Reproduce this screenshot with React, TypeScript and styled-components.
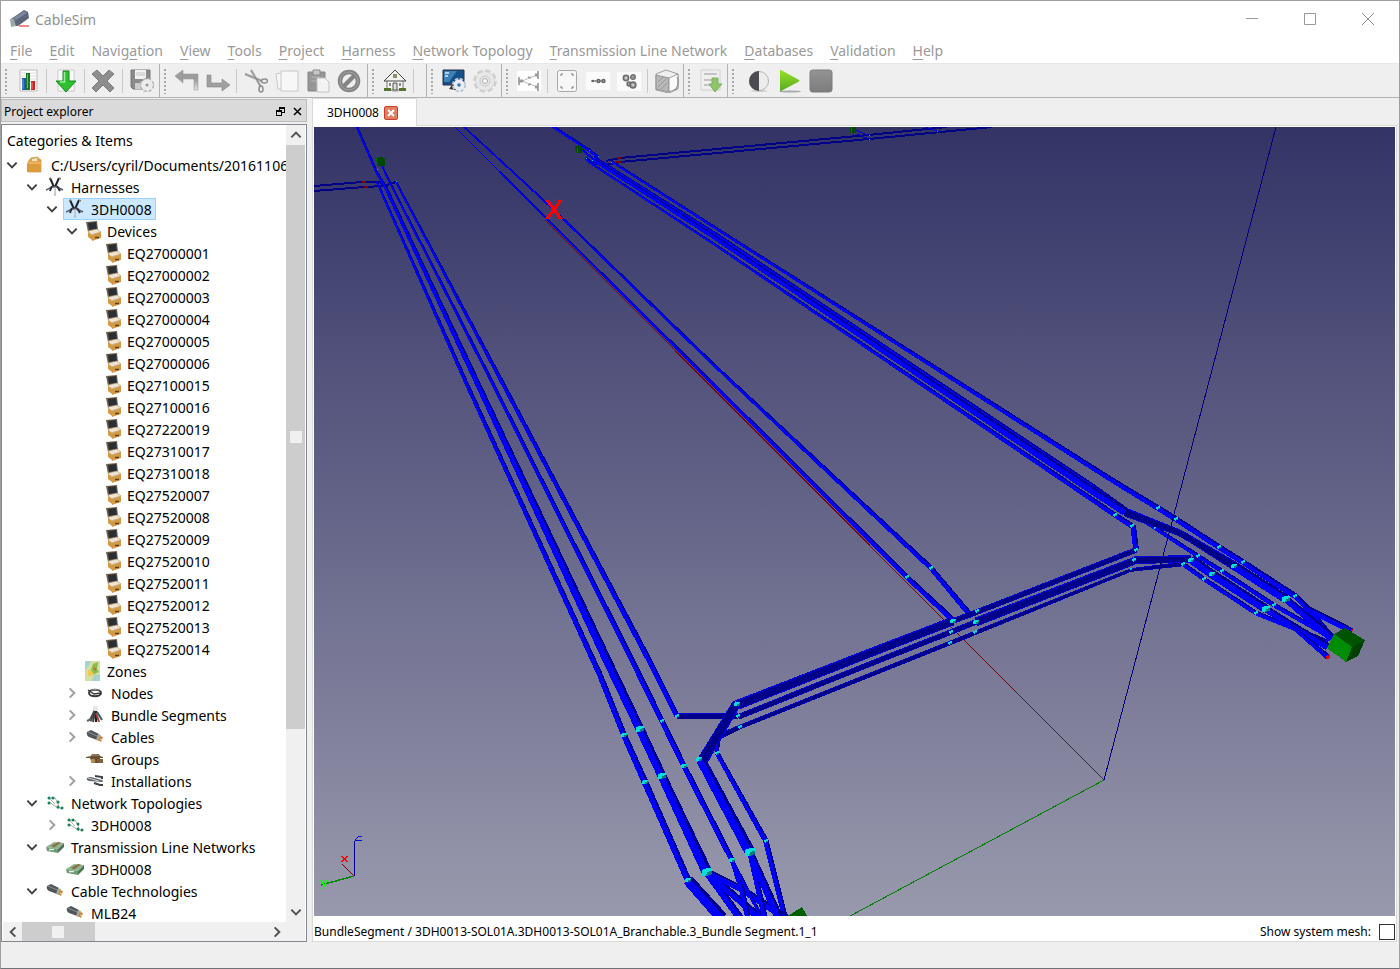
import React from "react";
import styled, { createGlobalStyle } from "styled-components";

const GlobalStyle = createGlobalStyle`
  * { box-sizing: border-box; }
  body { margin: 0; background: #efefef; }
  button { font: inherit; color: inherit; background: none; border: 0; padding: 0; margin: 0; }
  ul { list-style: none; margin: 0; padding: 0; }
`;

/* ---------- window frame ---------- */

const Window = styled.div`
  display: flex;
  flex-direction: column;
  height: 100vh;
  background: #efefef;
  border: 1px solid #a0a0a0;
  border-bottom-color: #6f7276;
  font-family: "Noto Sans", "Open Sans", sans-serif;
  font-size: 14px;
  color: #000;
`;

const TitleBar = styled.header`
  display: flex;
  align-items: center;
  height: 38px;
  flex: none;
  padding: 0 2px 2px 8px;
  background: #fff;
  color: #929292;
`;

const Title = styled.h1`
  flex: 1;
  margin: 0 0 0 4px;
  font-size: 14px;
  font-weight: 400;
`;

const WindowButton = styled.button`
  width: 58px;
  height: 36px;
  display: grid;
  place-items: center;
`;

const MenuBar = styled.nav`
  display: flex;
  gap: 17px;
  height: 24px;
  flex: none;
  align-items: center;
  padding-left: 9px;
  background: #fff;
  color: #999;
`;

const MenuButton = styled.button`
  white-space: nowrap;
  line-height: 22px;
  u { text-underline-offset: 3px; text-decoration-thickness: 1px; }
`;

/* ---------- toolbar ---------- */

const ToolBar = styled.div`
  display: flex;
  flex: none;
  height: 35px;
  border-top: 1px solid #e8e8e8;
  border-bottom: 1px solid #b2b2b2;
`;

const ToolGroup = styled.div<{ $end?: number; $last?: boolean }>`
  display: flex;
  align-items: center;
  padding: 0 ${(p) => p.$end ?? 1}px 0 0;
  border-right: ${(p) => (p.$last ? "0" : "1px solid #b2b2b2")};
  flex: ${(p) => (p.$last ? "1" : "none")};
`;

const Handle = styled.span<{ $wide?: boolean }>`
  width: ${(p) => (p.$wide ? 16 : 12)}px;
  height: 26px;
  background: radial-gradient(circle at 5px 2px, #a8a8a8 1px, transparent 1px) 0 0 / 12px 4px repeat-y;
`;

const ToolButton = styled.button`
  width: 30px;
  height: 30px;
  display: grid;
  place-items: center;
  & + & { margin-left: 1px; }
`;

const Separator = styled.span`
  width: 8px;
  height: 24px;
  background: linear-gradient(#c8c8c8, #c8c8c8) 3px 0 / 1px 100% no-repeat;
`;

/* ---------- main area ---------- */

const Main = styled.main`
  display: flex;
  flex: 1;
  min-height: 0;
  gap: 5px;
  padding-right: 2px;
`;

const Dock = styled.aside`
  display: flex;
  flex-direction: column;
  flex: none;
  width: 306px;
  padding-top: 1px;
`;

const DockTitle = styled.div`
  display: flex;
  align-items: center;
  height: 23px;
  flex: none;
  margin-bottom: 2px;
  padding: 1px 0 0 2px;
  background: #dadada;
  border: 1px solid #bcbcbc;
  font-size: 12px;
  h2 { flex: 1; margin: 0; font-size: 12px; font-weight: 400; }
  button { width: 17px; height: 17px; display: grid; place-items: center; }
`;

const TreeFrame = styled.div`
  display: grid;
  flex: 1;
  min-height: 0;
  grid-template-columns: 1fr 19px;
  grid-template-rows: 1fr 19px;
  border: 1px solid #828790;
  background: #fff;
  padding: 0 1px 0 1px;
`;

const TreePane = styled.div`
  overflow: hidden;
`;

const TreeHeader = styled.div`
  height: 29px;
  line-height: 32px;
  padding-left: 4px;
`;

const Row = styled.li<{ $depth: number }>`
  display: flex;
  height: 22px;
  padding-left: ${(p) => p.$depth * 20}px;
`;

const Branch = styled.button`
  width: 20px;
  height: 22px;
  flex: none;
  display: grid;
  place-items: center;
  padding-right: 3px;
`;

const BranchGap = styled.span`
  width: 20px;
  flex: none;
`;

const Item = styled.span<{ $selected?: boolean; $wide?: boolean }>`
  display: flex;
  align-items: center;
  white-space: nowrap;
  padding-right: 4px;
  background: ${(p) => (p.$selected ? "#cce8ff" : "none")};
  box-shadow: ${(p) => (p.$selected ? "inset 0 0 0 1px #99d1ff" : "none")};
  svg { margin: 0 ${(p) => (p.$wide ? 6 : 4)}px 0 ${(p) => (p.$wide ? 3 : 2)}px; flex: none; }
`;

const ScrollBar = styled.div<{ $horizontal?: boolean }>`
  display: flex;
  flex-direction: ${(p) => (p.$horizontal ? "row" : "column")};
  background: #f0f0f0;
`;

const ScrollArrow = styled.button`
  width: 19px;
  height: 20px;
  flex: none;
  display: grid;
  place-items: center;
`;

const Thumb = styled.div<{ $share: number }>`
  flex: ${(p) => p.$share} 0 0;
  display: grid;
  place-items: center;
  background: #cdcdcd;
  &::after { content: ""; width: 12px; height: 12px; background: #f0f0f0; }
`;

const Track = styled.div<{ $share: number }>`
  flex: ${(p) => p.$share} 0 0;
`;

const Center = styled.section`
  display: flex;
  flex-direction: column;
  flex: 1;
  min-width: 0;
`;

const TabBar = styled.div`
  display: flex;
  flex: none;
  height: 28px;
  border-bottom: 1px solid #d9d9d9;
`;

const Tab = styled.div`
  display: flex;
  align-items: center;
  gap: 5px;
  height: 28px;
  width: 105px;
  padding-left: 14px;
  background: #fff;
  border: 1px solid #d9d9d9;
  border-bottom: 0;
  font-size: 12px;
`;

const CloseTab = styled.button`
  width: 14px;
  height: 14px;
  display: grid;
  place-items: center;
  border: 1px solid #c8402c;
  border-radius: 2px;
  background: #e08060;
`;

const Document = styled.div`
  display: flex;
  flex-direction: column;
  flex: 1;
  min-height: 0;
  padding: 1px 1px 0;
  background: #fff;
  border: 1px solid #d9d9d9;
  border-top: 0;
`;

const Viewport = styled.svg`
  display: block;
  width: 100%;
  flex: 1;
  min-height: 0;
`;

const InfoRow = styled.div`
  display: flex;
  align-items: center;
  justify-content: space-between;
  height: 25px;
  flex: none;
  padding-top: 6px;
  font-size: 12px;
  line-height: 20px;
`;

const MeshLabel = styled.label`
  display: flex;
  align-items: center;
  gap: 8px;
`;

const CheckBox = styled.input`
  appearance: none;
  width: 16px;
  height: 16px;
  margin: 0;
  background: #fff;
  border: 1px solid #333;
`;

const StatusBar = styled.footer`
  height: 26px;
  flex: none;
`;

/* ---------- toolbar icons ---------- */

const toolIcons: Record<string, React.ReactNode> = {
  chart: (
    <g>
      <path d="M4 1h17v21H4z" fill="#fff" stroke="#bbb" />
      <path d="M5 4h15M5 7h15M5 10h15M5 13h15" stroke="#ddd" />
      <path d="M6 9h4v12H6z" fill="#2355b8" /><path d="M10 4h4v17h-4z" fill="#137a22" /><path d="M15 12h4v9h-4z" fill="#d32020" />
      <path d="M7 10v10" stroke="#7aa4ee" /><path d="M11.500 5v14" stroke="#58c060" /><path d="M16 13v7" stroke="#ff8080" />
    </g>
  ),
  download: (
    <g>
      <path d="M4 1h16v21H4z" fill="#fff" stroke="#c8c8c8" />
      <path d="M9 2h6v10h7L12 23 2 12h7z" fill="#2fc02f" stroke="#148a18" />
      <path d="M10.500 3v10H6" stroke="#9af09a" fill="none" strokeWidth="1.500" />
    </g>
  ),
  remove: <path d="M5 1l6 6 6-6 5 4-7 7 7 7-4 4-7-7-7 7-4-4 7-7-7-7z" fill="#8e8e8e" stroke="#7c7c7c" />,
  save: (
    <g>
      <path d="M1 1h19v19H3l-2-2z" fill="#8a8a8a" stroke="#777" />
      <path d="M5 1h11v9H5z" fill="#f1f1f1" /><path d="M6 4h9M6 6h9" stroke="#c4c4c4" /><path d="M5 14h8v6H5z" fill="#ccc" />
      <circle cx="17" cy="16" r="6" fill="#ececec" stroke="#b8b8b8" strokeDasharray="3.200 1.510" strokeWidth="2.500" />
      <circle cx="17" cy="16" r="5.800" fill="#ececec" />
      <circle cx="17" cy="16" r="1.500" fill="#999" />
    </g>
  ),
  undo: <path d="M0 7l8-6v4h15v16h-4V10H8v4z" fill="url(#arrowFill)" stroke="#9a9a9a" strokeWidth="0.600" />,
  redo: <path d="M1 6h4v8h11v-4l8 6-8 6v-4H1z" fill="#a0a0a0" stroke="#858585" strokeWidth="0.600" />,
  cut: (
    <g fill="none" stroke="#909090">
      <path d="M7 1l10 17M1 5l17 7" stroke="#b8b8b8" strokeWidth="2.500" />
      <path d="M7 1l10 17M1 5l17 7" stroke="#777" strokeWidth="0.700" />
      <ellipse cx="20.500" cy="12" rx="3" ry="2" strokeWidth="1.600" />
      <ellipse cx="17" cy="20" rx="2" ry="3" strokeWidth="1.600" />
    </g>
  ),
  copy: (
    <g fill="#f7f7f7" stroke="#c8c8c8">
      <path d="M1 5l14-3 2 18H3z" /><path d="M6 2h17v20H6z" />
    </g>
  ),
  paste: (
    <g>
      <path d="M2 3h17v19H2z" fill="#969696" stroke="#858585" /><path d="M7 1h7v5H7z" fill="#c8c8c8" stroke="#888" />
      <path d="M5 8h9M5 12h6" stroke="#b8b8b8" />
      <path d="M11 9h8l4 4v10H11z" fill="#f3f3f3" stroke="#c1c1c1" />
    </g>
  ),
  block: (
    <g fill="none" stroke="#848484">
      <circle cx="12" cy="12" r="9" strokeWidth="4.500" /><path d="M5.500 18.500l13-13" strokeWidth="4.500" />
      <circle cx="12" cy="12" r="9" stroke="#a3a3a3" />
    </g>
  ),
  home: (
    <g>
      <path d="M4 11h16v10H4z" fill="#f6f6f0" stroke="#777" />
      <path d="M1 12L12 1l11 11z" fill="#f2f2ee" stroke="#444" />
      <path d="M10 5h4v4h-4z" fill="#8d8d70" /><path d="M10 14h4v7h-4z" fill="#ddd" stroke="#555" />
      <path d="M6 14h2v3H6zM16 14h2v3h-2z" fill="#888" /><path d="M1 19h7v3H1zM16 19h7v3h-7z" fill="#55752e" />
      <path d="M9 22h6" stroke="#999" />
    </g>
  ),
  monitor: (
    <g>
      <path d="M1 1h21v15H1z" fill="#174f86" stroke="#2c3540" /><path d="M2 2h13L7 13H2z" fill="#3d7fb8" />
      <path d="M3 4h4M3 7h3" stroke="#d8ecff" strokeWidth="1.500" /><path d="M7 20l3-4h4v5z" fill="#333" />
      <circle cx="17" cy="16" r="5.800" fill="none" stroke="#b9c4d0" strokeDasharray="3.040 1.510" strokeWidth="2.800" />
      <circle cx="17" cy="16" r="5.500" fill="#e8edf3" /><circle cx="17" cy="16" r="1.800" fill="#3a78ac" />
    </g>
  ),
  gear: (
    <g>
      <circle cx="12" cy="12" r="10" fill="none" stroke="#cecece" strokeDasharray="5 2.850" strokeWidth="3.500" />
      <circle cx="12" cy="12" r="9.500" fill="#e8e8e8" stroke="#cfcfcf" strokeWidth="0.600" />
      <circle cx="12" cy="12" r="5" fill="none" stroke="#c8c8c8" />
      <circle cx="12" cy="12" r="2.500" fill="#fafafa" stroke="#aaa" />
    </g>
  ),
  links: (
    <g>
      <path d="M0 2h24v20H0z" fill="#fff" /><path d="M5 12l15-6M5 12l15 6" stroke="#bbb" />
      <path d="M2 8v8M21 2v8M21 14v8" stroke="#8a8a8a" strokeWidth="1.500" /><path d="M2 12h4M18 6h3M18 18h3" stroke="#999" strokeWidth="3" />
      <path d="M11 8l3 1M11 16l3-1" stroke="#999" strokeWidth="1.500" />
    </g>
  ),
  frame: (
    <g fill="none">
      <rect x="2.500" y="1.500" width="19" height="21" rx="2" fill="#f6f6f6" stroke="#a8a8a8" />
      <path d="M6 7V5h2M16 5h2v2M6 17v2h2M16 19h2v-2" stroke="#777" />
    </g>
  ),
  nodes: (
    <g>
      <path d="M0 3h24v18H0z" fill="#fbfbfb" /><path d="M5 12h14" stroke="#888" strokeWidth="1.500" />
      <circle cx="7" cy="12" r="1.200" fill="#666" /><circle cx="12.500" cy="12" r="2.200" fill="#666" /><circle cx="17.500" cy="12" r="2.200" fill="#666" />
      <path d="M12 12h1M17 12h1" stroke="#ddd" />
    </g>
  ),
  cluster: (
    <g fill="#9c9c9c" stroke="#6b6b6b" strokeWidth="1.300">
      <path d="M0 3h24v19H0z" fill="#fbfbfb" stroke="none" />
      <circle cx="9" cy="9" r="2.800" /><circle cx="16" cy="8" r="2.300" /><circle cx="12" cy="15" r="2" /><circle cx="16" cy="16" r="3" />
      <circle cx="16" cy="16" r="1" fill="#ddd" stroke="none" /><circle cx="9" cy="9" r="1" fill="#ddd" stroke="none" />
    </g>
  ),
  box: (
    <g stroke="#888" strokeWidth="0.800">
      <path d="M1 5l10-4 12 4v15l-9 4-13-3z" fill="#efefef" /><path d="M1 6l13 3v14L1 20z" fill="#b8b8b8" />
      <path d="M14 9l9-4v14l-9 4z" fill="#fafafa" /><path d="M3 18l8-8M3 13l5-5M6 20l6-6" stroke="#8f8f8f" />
      <path d="M22 8c2 4 1 9-2 13" fill="none" stroke="#777" />
    </g>
  ),
  importer: (
    <g>
      <path d="M2 1h19v20H2z" fill="#f0f0f0" stroke="#d0d0d0" /><path d="M5 5h13M5 11h8M5 16h6" stroke="#c4c4c4" strokeWidth="2" />
      <path d="M13 9h6v6h4l-7 8-6-8h3z" fill="#8fc46c" stroke="#7cb35b" />
    </g>
  ),
  contrast: (
    <g>
      <ellipse cx="12" cy="22" rx="8" ry="1" fill="#cfcfcf" />
      <circle cx="12" cy="12" r="9.500" fill="#ededed" stroke="#b4b4b4" /><path d="M12 2a10 10 0 0 0 0 20z" fill="#4b4b50" />
    </g>
  ),
  play: (
    <g>
      <ellipse cx="12" cy="22.500" rx="11" ry="1" fill="#aaa" />
      <path d="M2 1.500Q2 .5 3 1l18 10q1 .8 0 1.500L3 22q-1 .5-1-.5z" fill="url(#playFill)" />
    </g>
  ),
  stop: <rect x="1" y="1" width="22" height="22" rx="2.500" fill="url(#stopFill)" stroke="#7c7c7c" />,
};

const Icon = ({ name }: { name: string }) => (
  <svg width="24" height="24" viewBox="0 0 24 24" aria-hidden="true">
    <defs>
      <linearGradient id="playFill" x1="0" y1="0" x2="0" y2="1">
        <stop offset="0" stopColor="#9be02c" /><stop offset="1" stopColor="#57ab1e" />
      </linearGradient>
      <linearGradient id="stopFill" x1="0" y1="0" x2="0" y2="1">
        <stop offset="0" stopColor="#949494" /><stop offset="1" stopColor="#7c7c7c" />
      </linearGradient>
      <linearGradient id="arrowFill" x1="0" y1="0" x2="0" y2="1">
        <stop offset="0.500" stopColor="#9c9c9c" /><stop offset="1" stopColor="#e4e4e4" />
      </linearGradient>
    </defs>
    {toolIcons[name]}
  </svg>
);

type Group = { items: string[]; end?: number; wide?: boolean; last?: boolean };

const toolGroups: Group[] = [
  { items: ["chart", "|", "download", "|", "remove", "|", "save"], end: 2 },
  { items: ["undo", "redo", "|", "cut", "copy", "paste", "block"], end: 3 },
  { items: ["home", "|"], end: 8 },
  { items: ["monitor", "gear"] },
  { items: ["links", "|", "frame", "nodes", "cluster", "|", "box"], end: 1 },
  { items: ["importer"] },
  { items: ["contrast", "play", "stop"], wide: true, last: true },
];

/* ---------- tree icons ---------- */

const treeIcons: Record<string, React.ReactNode> = {
  folder: (
    <g>
      <path d="M2 7l3-4 6-1 4 3v12H2z" fill="#e3a449" stroke="#bf7f2b" strokeWidth="0.600" /><path d="M6 4l5-1v3H6z" fill="#f5e5c4" />
      <path d="M1 8h14v9H1z" fill="#dc9b3d" /><path d="M1 8h14" stroke="#f4c77d" />
    </g>
  ),
  harness: (
    <g fill="none">
      <path d="M4 1l4 9M13 1l-4 9" stroke="#1c222c" strokeWidth="2" />
      <path d="M3 2l2-1M13 1l2 1" stroke="#8a7a50" strokeWidth="1.500" />
      <path d="M0 13l6-3h5l6 3" stroke="#565d68" strokeWidth="1.500" /><path d="M6 9l-2 5M11 9l3 5" stroke="#2a303a" strokeWidth="2" />
      <path d="M9 10v7M8 17l1 1 1-1" stroke="#b6bbc2" strokeWidth="1.500" />
    </g>
  ),
  device: (
    <g>
      <path d="M1 1l11-1 1 9-10 2z" fill="#75614e" /><path d="M3 2l8-1 1 7-8 1z" fill="#2a2f36" />
      <path d="M3 10l9-2 4 3-10 3z" fill="#ede4d3" stroke="#a88c62" strokeWidth="0.600" />
      <path d="M3 11l4 3v5l-4-3zM7 14l9-3v6l-9 3z" fill="#d39a45" /><path d="M10 16.500h4" stroke="#5c3b16" strokeWidth="1.500" />
    </g>
  ),
  zone: (
    <g>
      <path d="M0 0h15v20H0z" fill="#d5dfa2" /><path d="M0 0h6L3 6 0 9zM9 13l6 1v6H7z" fill="#a6d3d0" />
      <path d="M8 3l5-2-1 7 2 3-5 2-4-1z" fill="#88bd4b" /><path d="M3 9l4 1 2 4-6 1z" fill="#efc954" /><path d="M9 7l2 2" stroke="#c6673c" strokeWidth="2" />
    </g>
  ),
  node: (
    <g fill="none" stroke="#383838">
      <ellipse cx="9" cy="10" rx="6" ry="3.200" strokeWidth="2" /><path d="M2 7l6 4 7-1" strokeWidth="1.500" /><path d="M5 7q4-1 8 0" stroke="#999" />
    </g>
  ),
  bundle: (
    <g fill="none" strokeWidth="2">
      <path d="M7 1h5v6H7z" fill="#e8e8e8" /><path d="M9 6l-5 10" stroke="#474747" strokeWidth="3" /><path d="M9 7l-2 10" stroke="#404040" />
      <path d="M10 6v11" stroke="#222" /><path d="M10 8l3 9" stroke="#a93939" /><path d="M11 7l5 8" stroke="#38605e" /><path d="M1 16l4-2" stroke="#666" />
    </g>
  ),
  cable: (
    <g>
      <path d="M1 5l4-2 8 4-2 6-8-3Q0 8 1 5z" fill="#50565a" /><path d="M2 5l9 4" stroke="#8a9093" />
      <path d="M12 7l3 1-2 6-3-1z" fill="#a8a8a0" /><path d="M14 9l3 1-2 5-3-2z" fill="#c58742" /><path d="M14 12l2 1" stroke="#f5d58c" />
    </g>
  ),
  group: (
    <g>
      <path d="M0 8l5-1 1-2h7l1 2 3 1v1H0z" fill="#6a5137" /><path d="M4 9h10v4l-2 1H6z" fill="#6c4a2c" />
      <circle cx="7" cy="12" r="2.300" fill="#b08f59" /><path d="M11 10h6v4h-5z" fill="#7d5f3c" /><path d="M6 6h7" stroke="#b19a7a" />
    </g>
  ),
  installation: (
    <g>
      <path d="M1 7q2-1 4-1l11 3q2 1 0 2L3 10Q0 9 1 7z" fill="#65696d" /><path d="M2 7l11 3" stroke="#c9cdd0" />
      <path d="M8 12l6 2h3M9 5l7 1v2" stroke="#3c4044" strokeWidth="2" fill="none" />
    </g>
  ),
  topology: (
    <g>
      <path d="M3 5l6 0M3 5l6 6M9 5l3 5 1 5M3 9l9 6h4" stroke="#999" fill="none" strokeWidth="0.800" />
      <g fill="#158255"><circle cx="3" cy="5" r="1.500" /><circle cx="7" cy="5" r="1.500" /><circle cx="3" cy="10" r="1.500" /><circle cx="12" cy="9" r="1.500" /><circle cx="12" cy="14" r="1.500" /><circle cx="16" cy="15" r="1.500" /></g>
    </g>
  ),
  network: (
    <g>
      <path d="M0 10l8-5 10 1-6 6z" fill="#8fb492" /><path d="M0 10l12 2v4L1 14z" fill="#6c9a73" /><path d="M12 12l6-6v4l-6 6z" fill="#4c7453" />
      <path d="M5 9l7-4 3 .5-7 5z" fill="#8b713f" /><path d="M3 12.500h5" stroke="#e7f3e6" strokeWidth="1.500" />
    </g>
  ),
};

const TreeIcon = ({ name }: { name: string }) => {
  const width = name === "device" || name === "zone" ? 18 : 19;
  return (
    <svg width={width} height="20" viewBox={`0 0 ${width} 20`} aria-hidden="true">{treeIcons[name]}</svg>
  );
};

type Node = { depth: number; icon: string; text: string; state?: "open" | "closed"; selected?: boolean };

const deviceNames = [
  "EQ27000001", "EQ27000002", "EQ27000003", "EQ27000004", "EQ27000005", "EQ27000006",
  "EQ27100015", "EQ27100016", "EQ27220019", "EQ27310017", "EQ27310018", "EQ27520007",
  "EQ27520008", "EQ27520009", "EQ27520010", "EQ27520011", "EQ27520012", "EQ27520013", "EQ27520014",
];

const tree: Node[] = [
  { depth: 0, icon: "folder", text: "C:/Users/cyril/Documents/20161106", state: "open" },
  { depth: 1, icon: "harness", text: "Harnesses", state: "open" },
  { depth: 2, icon: "harness", text: "3DH0008", state: "open", selected: true },
  { depth: 3, icon: "device", text: "Devices", state: "open" },
  ...deviceNames.map((text) => ({ depth: 4, icon: "device", text })),
  { depth: 3, icon: "zone", text: "Zones" },
  { depth: 3, icon: "node", text: "Nodes", state: "closed" },
  { depth: 3, icon: "bundle", text: "Bundle Segments", state: "closed" },
  { depth: 3, icon: "cable", text: "Cables", state: "closed" },
  { depth: 3, icon: "group", text: "Groups" },
  { depth: 3, icon: "installation", text: "Installations", state: "closed" },
  { depth: 1, icon: "topology", text: "Network Topologies", state: "open" },
  { depth: 2, icon: "topology", text: "3DH0008", state: "closed" },
  { depth: 1, icon: "network", text: "Transmission Line Networks", state: "open" },
  { depth: 2, icon: "network", text: "3DH0008" },
  { depth: 1, icon: "cable", text: "Cable Technologies", state: "open" },
  { depth: 2, icon: "cable", text: "MLB24" },
];

const arrowPaths = {
  up: "M2 8l4-4 4 4",
  down: "M2 4l4 4 4-4",
  left: "M8 2L4 6l4 4",
  right: "M4 2l4 4-4 4",
};

const Arrow = ({ dir, color = "#505050" }: { dir: keyof typeof arrowPaths; color?: string }) => (
  <svg width="14" height="14" viewBox="0 0 12 12" aria-hidden="true">
    <path d={arrowPaths[dir]} fill="none" stroke={color} strokeWidth="1.700" />
  </svg>
);

/* ---------- 3D scene ---------- */

type P3 = [number, number, number];

/** Outline of a cable whose thickness changes along its path, between two shares of its width. */
const ribbon = (pts: P3[], from: number, to: number) => {
  const left: string[] = [];
  const right: string[] = [];
  pts.forEach(([x, y, w], i) => {
    const a = pts[Math.max(0, i - 1)];
    const b = pts[Math.min(pts.length - 1, i + 1)];
    const len = Math.hypot(b[0] - a[0], b[1] - a[1]) || 1;
    const nx = -(b[1] - a[1]) / len;
    const ny = (b[0] - a[0]) / len;
    const t = w * 1.05 + 0.4;
    left.push(`${(x + nx * t * from).toFixed(1)},${(y + ny * t * from).toFixed(1)}`);
    right.unshift(`${(x + nx * t * to).toFixed(1)},${(y + ny * t * to).toFixed(1)}`);
  });
  return [...left, ...right].join(" ");
};

const Cable = ({ pts, dim }: { pts: P3[]; dim?: boolean }) => (
  <g>
    <polygon points={ribbon(pts, -0.5, 0.5)} fill={dim ? "#0000d8" : "#000090"} />
    <polygon points={dim ? ribbon(pts, -0.34, 0.4) : ribbon(pts, -0.2, 0.5)} fill={dim ? "#000088" : "#0000fc"} />
  </g>
);

const backCables: P3[][] = [
  [[552, 126, 2.5], [589, 150, 2.5], [598, 157, 2.5]],
  [[583, 150, 1.5], [594, 160, 2]],
  [[586, 158, 2.5], [590, 162, 2.5], [596, 164, 2.5]],
  [[611, 161, 2], [714, 227, 2.5], [1112, 480, 4.5], [1158, 508, 5], [1176, 519, 5], [1219, 547, 5], [1243, 562, 5], [1295, 596, 5.5]],
  [[594, 157, 2], [714, 233, 3], [1090, 484, 4], [1132, 514, 4]],
  [[594, 160, 3], [714, 237, 4], [1090, 489, 7], [1125, 512, 7]],
  [[589, 162, 1.8], [714, 244, 2.2], [1090, 498, 4.5], [1115, 515, 4.5], [1132, 526, 5]],
  [[1133, 525, 5], [1136, 549, 5]],
  [[1133, 514, 3], [1155, 528, 3.5], [1198, 556, 4], [1222, 571, 4], [1274, 605, 4], [1332, 638, 4]],
  [[455, 127, 0.7], [546, 218, 1.2], [709, 380, 3], [907, 577, 4.5], [953, 620, 5]],
  [[464, 127, 1.2], [553, 209, 1.8], [714, 365, 2.8], [931, 568, 4.5], [972, 617, 5]],
  [[357, 127, 2], [377, 173, 2.2], [386, 188, 3], [476, 380, 5], [607, 660, 8], [640, 729, 8], [662, 776, 8], [707, 872, 10]],
  [[377, 182, 2], [465, 380, 3.5], [600, 675, 5], [624, 735, 5.5], [645, 782, 6], [688, 880, 6]],
  [[382, 166, 1.2], [391, 185, 1.8], [491, 380, 3], [632, 660, 5], [662, 721, 5], [684, 766, 5], [732, 860, 5]],
  [[396, 182, 1.8], [501, 380, 3.5], [649, 660, 5], [677, 716, 5]],
];

const bars: P3[][] = [
  [[1125, 512, 8], [1180, 533, 6], [1192, 540, 6], [1233, 565, 8]],
  [[1134, 560, 7], [1191, 559, 7]],
  [[1131, 570, 3], [1183, 564, 4]],
  [[737, 705, 9], [880, 649, 8], [953, 621, 8]],
  [[953, 621, 5], [977, 612, 5], [1136, 550, 5]],
  [[738, 717, 5], [880, 660, 5], [951, 632, 5], [976, 622, 5]],
  [[976, 622, 8], [1134, 561, 7]],
  [[718, 737, 5], [740, 727, 4], [880, 671, 4], [950, 643, 4], [1131, 570, 3]],
  [[677, 716, 6], [738, 716, 6]],
];

const frontCables: P3[][] = [
  [[1191, 559, 8], [1212, 574, 8], [1266, 609, 8]],
  [[1233, 565, 8], [1286, 599, 8]],
  [[1183, 564, 4], [1204, 579, 4], [1256, 613, 4], [1328, 642, 4]],
  [[1266, 609, 6], [1300, 630, 6], [1328, 647, 7]],
  [[1290, 625, 3], [1328, 657, 5]],
  [[1295, 596, 5], [1310, 611, 5], [1330, 634, 4]],
  [[1286, 599, 6], [1332, 638, 8]],
  [[1304, 607, 5], [1320, 615, 6], [1352, 631, 5]],
  [[718, 737, 4], [717, 753, 4], [766, 841, 5], [785, 918, 5]],
  [[701, 760, 9], [750, 852, 10]],
  [[688, 880, 10], [722, 918, 11]],
  [[707, 872, 7], [740, 918, 7]],
  [[707, 872, 6], [760, 918, 7]],
  [[707, 872, 6], [740, 888, 6], [786, 918, 7]],
  [[732, 860, 4], [742, 890, 5], [748, 918, 5]],
  [[732, 860, 3], [762, 918, 3]],
  [[750, 852, 5], [765, 918, 5]],
  [[750, 852, 6], [779, 918, 8]],
];

const joints: P3[] = [
  [1158, 508, 2], [1176, 519, 2], [1219, 547, 2], [1243, 562, 2], [1295, 596, 2], [1115, 515, 2], [1132, 526, 2],
  [1136, 550, 2], [1155, 528, 1], [1198, 556, 2], [1222, 571, 2], [1274, 605, 2], [1191, 560, 3], [1234, 566, 3],
  [1212, 574, 3], [1266, 609, 4], [1286, 599, 4], [1183, 564, 2], [1204, 579, 2], [1256, 613, 2], [1134, 560, 2],
  [1131, 569, 1], [907, 577, 2], [931, 568, 2], [953, 621, 3], [977, 611, 2], [976, 622, 3], [951, 632, 2],
  [950, 643, 2], [975, 632, 2], [737, 704, 3], [738, 716, 2], [740, 727, 2], [677, 716, 2], [699, 759, 3],
  [717, 753, 2], [624, 735, 3], [640, 729, 4], [662, 721, 2], [645, 782, 3], [662, 776, 4], [684, 766, 3],
  [688, 880, 3], [707, 872, 5], [732, 860, 3], [750, 852, 5], [766, 841, 2],
];

const specks: [number, number][] = [
  [377, 169], [396, 181], [589, 150], [598, 156], [586, 158], [592, 160], [611, 162], [869, 135], [869, 139], [937, 131],
];

const Joint = ({ at: [x, y, r] }: { at: P3 }) => (
  <g transform={`translate(${x} ${y})`}>
    <path d={`M${-r} ${r * 0.7}L${-r} ${-r * 0.4}L0 ${-r * 0.8}L${r} ${-r * 0.8}L${r} 0L0 ${r * 0.8}z`} fill="#00dede" />
    <path d={`M${-r * 0.2} ${r * 0.8}L0 0L${r} ${-r * 0.3}L${r} ${r * 0.4}z`} fill="#008080" />
  </g>
);

const Scene = () => (
  <Viewport
    viewBox="314 127 1081 789"
    preserveAspectRatio="xMidYMid slice"
    shapeRendering="crispEdges"
    role="img"
    aria-label="3D harness view"
  >
    <defs>
      <linearGradient id="sky" x1="0" y1="0" x2="0" y2="1">
        <stop offset="0" stopColor="#333366" />
        <stop offset="1" stopColor="#9999ad" />
      </linearGradient>
    </defs>
    <rect x="314" y="127" width="1081" height="789" fill="url(#sky)" />
    <g fill="none" stroke="#000088" strokeWidth="2">
      <path d="M314 186l48-4h17l9 5M314 191l50-4 20-1 12-4M610 164l10-2 249-23 123-12M606 161l14-3 248-23 79-8" />
      <path d="M855 130l13 5M857 134l12 5M925 127l12 4" stroke="#0000d0" strokeWidth="1" />
      <path d="M596 164h14" />
    </g>
    <path d="M362 182h4M364 187h4M617 158h4M616 162h5" stroke="#800000" strokeWidth="2" />
    <path d="M545 220L1016 692" stroke="#800000" fill="none" />
    <path d="M1016 692l88 88" stroke="#30303c" fill="none" />
    {backCables.map((pts, i) => <Cable key={i} pts={pts} />)}
    {bars.map((pts, i) => <Cable key={i} pts={pts} dim />)}
    {frontCables.map((pts, i) => <Cable key={i} pts={pts} />)}
    <Cable dim pts={[[737, 703, 8], [703, 760, 10]]} />
    <path d="M1276 127L1104 780" stroke="#000080" fill="none" />
    <path d="M1104 780L850 916" stroke="#008000" fill="none" />
    {joints.map((at, i) => <Joint key={i} at={at} />)}
    {specks.map(([x, y], i) => <rect key={i} x={x} y={y} width="1" height="1" fill="#00c8d8" />)}
    <path d="M1334 634l11-6 20 12-13 7z" fill="#005400" />
    <path d="M1334 634l-7 14 19 14 6-15z" fill="#008c00" />
    <path d="M1352 647l13-7-7 16-12 6z" fill="#004000" />
    <circle cx="1328" cy="657" r="2" fill="#e00000" /><circle cx="1352" cy="630" r="1.500" fill="#d00000" />
    <path d="M786 917l16-10 6 10z" fill="#006000" />
    <path d="M376 158l6-1 3 3v6h-7z" fill="#004800" /><path d="M376 158l2 8" stroke="#007000" />
    <path d="M575 147l4-2 4 3-1 5h-6z" fill="#004800" /><path d="M577 148v5" stroke="#008000" />
    <path d="M850 127h6v4l-2 2h-4z" fill="#004800" /><path d="M851 127v6" stroke="#008000" />
    <path d="M547 200l14 19M561 200l-14 19" stroke="#f00" strokeWidth="3" />
    <path d="M545 200.500h5M558 200.500h4M545 218.500h5M558 218.500h5" stroke="#f00" />
    <g fill="none">
      <path d="M354.500 841v35" stroke="#000090" /><path d="M355 840.500h7M355 840l4-4h3" stroke="#00f" />
      <path d="M354 876l-12-12" stroke="#800000" /><path d="M354 876l-33 9" stroke="#008800" strokeWidth="1.500" />
      <path d="M342 856l5 6M347 856l-5 6" stroke="#f00" strokeWidth="1.500" />
      <path d="M321 880l3 5M327 880l-4 9" stroke="#0f0" strokeWidth="1.500" />
    </g>
  </Viewport>
);

/* ---------- page ---------- */

const menus: [string, number][] = [
  ["File", 0], ["Edit", 0], ["Navigation", 5], ["View", 0], ["Tools", 0], ["Project", 0], ["Harness", 0],
  ["Network Topology", 0], ["Transmission Line Network", 0], ["Databases", 0], ["Validation", 0], ["Help", 0],
];

export default function App() {
  return (
    <Window>
      <GlobalStyle />
      <TitleBar>
        <svg width="22" height="20" viewBox="0 0 22 20" aria-hidden="true">
          <path d="M2 10L15 1l4 2 1 6-11 8q-6 1-7-7z" fill="#5b6478" />
          <path d="M4 9l11-7 3 2-11 7z" fill="#7d869b" /><path d="M1 10l4 0 2 7-5 1z" fill="#9aa8a8" />
          <path d="M10 17h10" stroke="#f06060" strokeWidth="1.500" />
        </svg>
        <Title>CableSim</Title>
        <WindowButton aria-label="Minimize">
          <svg width="12" height="12"><path d="M0 5.500h12" stroke="#999" /></svg>
        </WindowButton>
        <WindowButton aria-label="Maximize">
          <svg width="12" height="12"><path d="M.5.5h11v11H.5z" fill="none" stroke="#999" /></svg>
        </WindowButton>
        <WindowButton aria-label="Close">
          <svg width="12" height="12"><path d="M0 0l12 12M12 0L0 12" stroke="#909090" /></svg>
        </WindowButton>
      </TitleBar>
      <MenuBar>
        {menus.map(([name, key]) => (
          <MenuButton key={name}>
            {name.slice(0, key)}<u>{name[key]}</u>{name.slice(key + 1)}
          </MenuButton>
        ))}
      </MenuBar>
      <ToolBar role="toolbar">
        {toolGroups.map((group, g) => (
          <ToolGroup key={g} $end={group.end} $last={group.last}>
            <Handle $wide={group.wide} />
            {group.items.map((name, i) =>
              name === "|" ? <Separator key={i} /> : <ToolButton key={i} aria-label={name}><Icon name={name} /></ToolButton>
            )}
          </ToolGroup>
        ))}
      </ToolBar>
      <Main>
        <Dock>
          <DockTitle>
            <h2>Project explorer</h2>
            <button aria-label="Float">
              <svg width="9" height="9" shapeRendering="crispEdges">
                <path d="M3 0h6v6H6v3H0V3h3z" fill="#000" /><path d="M1 5h4v3H1zM4 2h4v3H6V3H4z" fill="#dadada" />
              </svg>
            </button>
            <button aria-label="Close panel">
              <svg width="9" height="9"><path d="M1 1l7 7M8 1L1 8" stroke="#000" strokeWidth="1.500" /></svg>
            </button>
          </DockTitle>
          <TreeFrame>
            <TreePane>
              <TreeHeader>Categories &amp; Items</TreeHeader>
              <ul role="tree">
                {tree.map((n, i) => (
                  <Row key={i} $depth={n.depth} role="treeitem" aria-selected={!!n.selected}>
                    {n.state ? (
                      <Branch aria-label={n.state === "open" ? "Collapse" : "Expand"}>
                        <Arrow dir={n.state === "open" ? "down" : "right"} color={n.state === "open" ? "#404040" : "#a0a0a0"} />
                      </Branch>
                    ) : <BranchGap />}
                    <Item $selected={n.selected} $wide={n.icon !== "device" && n.icon !== "zone"}>
                      <TreeIcon name={n.icon} />{n.text}
                    </Item>
                  </Row>
                ))}
              </ul>
            </TreePane>
            <ScrollBar>
              <ScrollArrow aria-label="Scroll up"><Arrow dir="up" /></ScrollArrow>
              <Thumb $share={582} />
              <Track $share={173} />
              <ScrollArrow aria-label="Scroll down"><Arrow dir="down" /></ScrollArrow>
            </ScrollBar>
            <ScrollBar $horizontal>
              <ScrollArrow aria-label="Scroll left"><Arrow dir="left" /></ScrollArrow>
              <Thumb $share={72} />
              <Track $share={170} />
              <ScrollArrow aria-label="Scroll right"><Arrow dir="right" /></ScrollArrow>
            </ScrollBar>
            <ScrollBar />
          </TreeFrame>
        </Dock>
        <Center>
          <TabBar>
            <Tab>
              3DH0008
              <CloseTab aria-label="Close tab">
                <svg width="8" height="8"><path d="M1 1l6 6M7 1L1 7" stroke="#fff" strokeWidth="2" /></svg>
              </CloseTab>
            </Tab>
          </TabBar>
          <Document>
            <Scene />
            <InfoRow>
              <span>BundleSegment / 3DH0013-SOL01A.3DH0013-SOL01A_Branchable.3_Bundle Segment.1_1</span>
              <MeshLabel>Show system mesh: <CheckBox type="checkbox" /></MeshLabel>
            </InfoRow>
          </Document>
        </Center>
      </Main>
      <StatusBar />
    </Window>
  );
}
